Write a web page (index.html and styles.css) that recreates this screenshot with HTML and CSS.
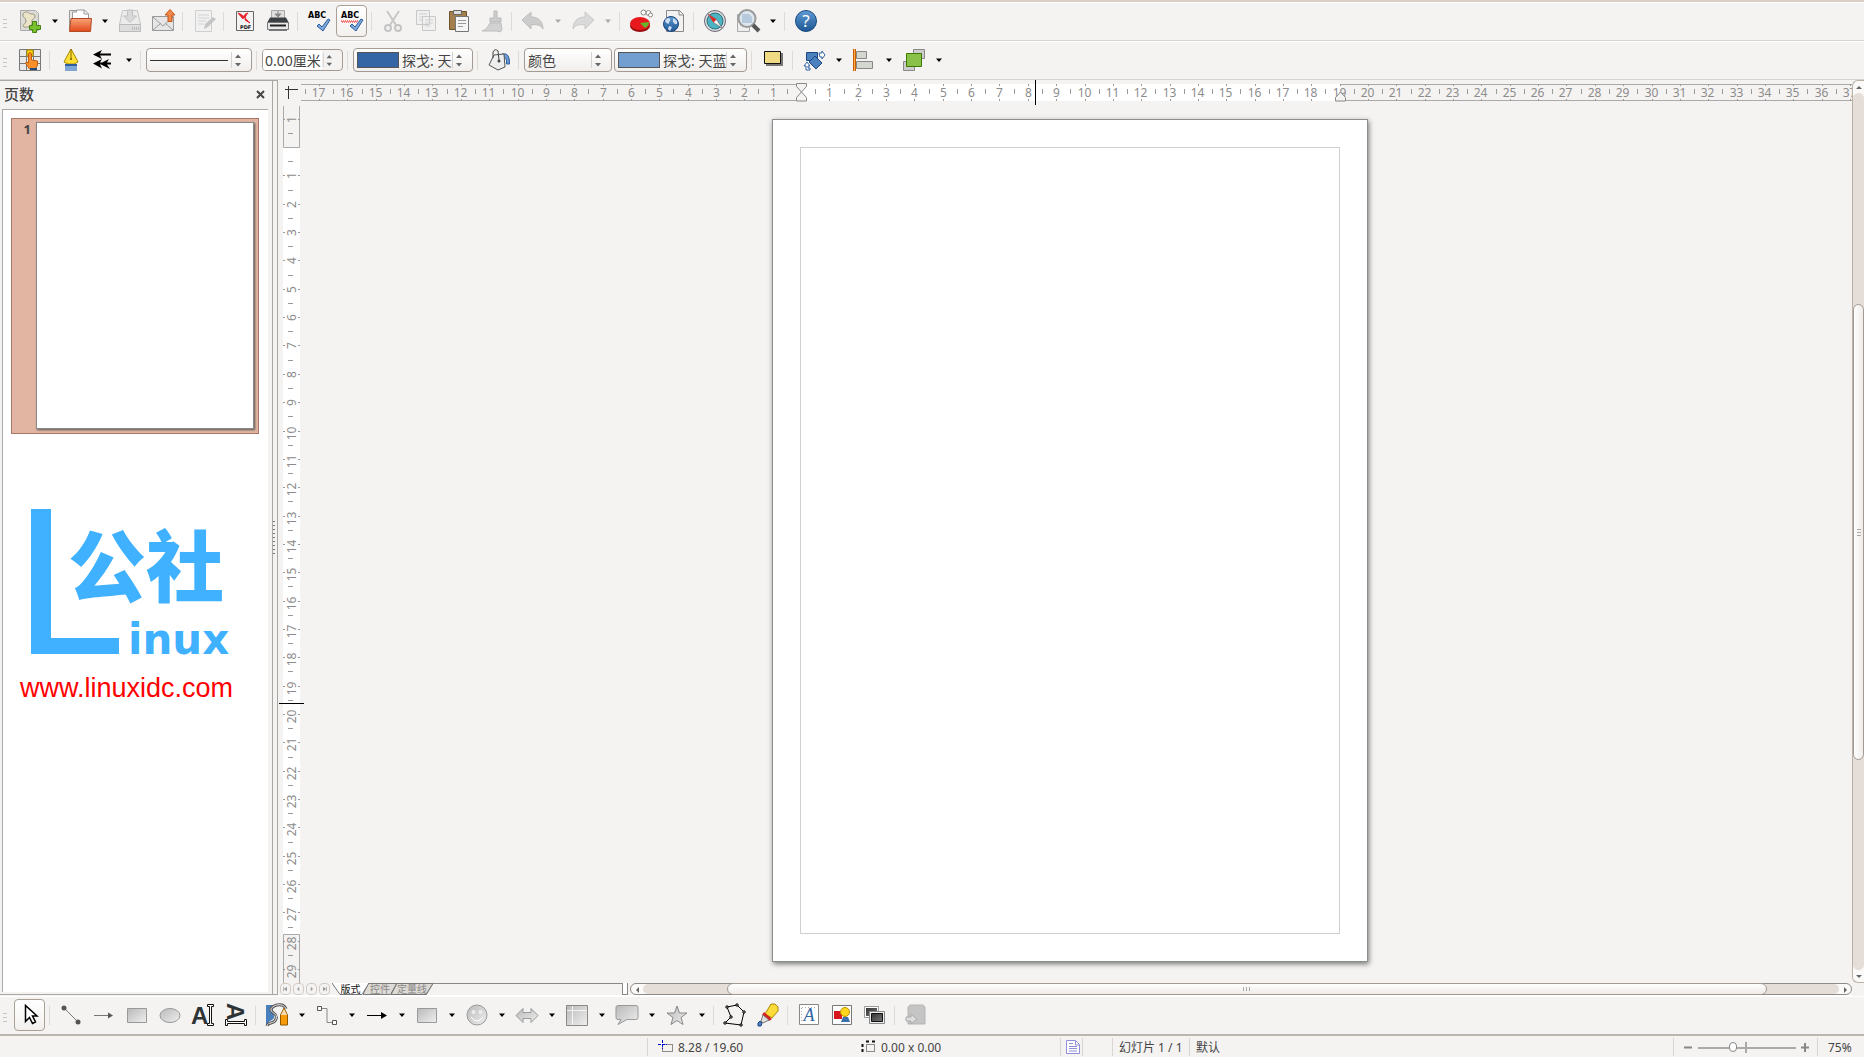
FILE: index.html
```html
<!DOCTYPE html>
<html lang="zh-CN">
<head>
  <meta charset="UTF-8">
  <title>无标题 1 - LibreOffice Draw</title>
  <meta name="viewport" content="width=device-width, initial-scale=1.0">
  <link rel="stylesheet" href="styles.css">
</head>
<body>

  <!-- shared gradients -->
  <svg class="defs" aria-hidden="true">
    <defs>
      <linearGradient id="gGrey" x1="0" y1="0" x2="1" y2="1"><stop offset="0" stop-color="#b9b9b9"/><stop offset="1" stop-color="#efefef"/></linearGradient>
      <linearGradient id="gOrange" x1="0" y1="0" x2="0" y2="1"><stop offset="0" stop-color="#f9a47a"/><stop offset="1" stop-color="#e2481a"/></linearGradient>
      <linearGradient id="gBlue" x1="0" y1="0" x2="0" y2="1"><stop offset="0" stop-color="#5f9bd4"/><stop offset="1" stop-color="#1d5793"/></linearGradient>
      <linearGradient id="gDark" x1="0" y1="0" x2="1" y2="1"><stop offset="0" stop-color="#333"/><stop offset="1" stop-color="#777"/></linearGradient>
    </defs>
    <symbol id="updown" viewBox="0 0 20 22"><path d="M.5 3v16" stroke="#d5d1cc"/><path d="M4 9h6L7 5.500zM4 14h6l-3 3.500z" fill="#666"/></symbol>
    <symbol id="down" viewBox="0 0 17 24"><path d="M6 10.500h6l-3 3.500z" fill="currentColor"/></symbol>
  </svg>

  <div class="topline"></div>

  <!-- standard toolbar -->
  <div class="toolbar">
    <i class="grip"></i>
    <button class="tool" aria-label="新建"><svg viewBox="0 0 24 24"><path d="M2.500 1.500h15l3 3v17h-18z" fill="#dcdcd8" stroke="#aaa"/><path d="M5 5c2-3 5-2 6-1 2 2 6 0 6 3s-4 3-3 6-3 6-8 5c-3-2 2-3 2-6S4 8 5 5z" fill="#ece4c8" stroke="#9a927c"/><path d="M14.500 12.500h4v4h4v4h-4v3h-4v-3h-3v-4h3z" fill="#79c02d" stroke="#478314"/></svg></button><button class="arrow" aria-label="新建选项"><svg><use href="#down"/></svg></button>
    <button class="tool" aria-label="打开"><svg viewBox="0 0 24 24"><path d="M1.500 20V1.500h7l2 3V20z" fill="#e8e8e8" stroke="#999"/><path d="M4.500 14V3h4V1h8l4 4v9z" fill="#fff" stroke="#999"/><path d="M16 1v4h4" fill="none" stroke="#999"/><path d="M3 9.500h20.500L22.500 22.500H1.500z" fill="url(#gOrange)" stroke="#b24a25"/></svg></button><button class="arrow" aria-label="打开选项"><svg><use href="#down"/></svg></button>
    <button class="tool" aria-label="保存"><svg viewBox="0 0 24 24"><path d="M4.500 1.500h15l3 14v7h-21v-7z" fill="#ececec" stroke="#c6c6c6"/><path d="M1.500 15.500h21v7h-21z" fill="#ddd" stroke="#bbb"/><path d="M9.500 1v6h-4l6.500 6.500L18.500 7h-4V1z" fill="#d9d9d9" stroke="#c2c2c2"/><path d="M14 19.500h7" stroke="#bbb" stroke-width="3" stroke-dasharray="1 1"/></svg></button>
    <button class="tool" aria-label="电子邮件"><svg viewBox="0 0 24 24"><path d="M1.500 7.500h21v14h-21z" fill="#e6e6e6" stroke="#999"/><path d="M2 8l10 9L22 8M2 21l8-7M22 21l-8-7" fill="none" stroke="#999"/><path d="M19 .500l5 5.500h-3v6.500h-4V6h-3z" fill="#f18748" stroke="#c45517"/></svg></button>
    <i class="sep"></i>
    <button class="tool" aria-label="编辑文件" disabled><svg viewBox="0 0 24 24"><path d="M3.500 1.500h16v21h-16z" fill="#f1f1f1" stroke="#cfcfcf"/><path d="M6 6h11M6 9h11M6 12h8M6 15h6" stroke="#d3d3d3"/><path d="M21 8l3 2-8 8-4 2 1-5z" fill="#c5c5c5"/></svg></button>
    <i class="sep"></i>
    <button class="tool" aria-label="导出为 PDF"><svg viewBox="0 0 24 24"><path d="M3.500 2.500h17v19h-17z" fill="#f3f3f3" stroke="#666"/><path d="M5 4c4 1 7 5 12 10l-5-3c0-3 1-5 3-7-4 1-4 3-5 6z" fill="#e8232b" stroke="#e8232b"/><text x="7" y="20" class="pdf">PDF</text></svg></button>
    <button class="tool" aria-label="打印"><svg viewBox="0 0 24 24"><path d="M5.500 9V1.500h13V9" fill="#ddd" stroke="#aaa"/><path d="M12 2v3M9 5h6l-3 3z" stroke="#888" fill="#888"/><path d="M4 8.500h16l3 5.500H1z" fill="#3c4043"/><path d="M1.500 13.500h21v7h-21z" fill="#e8e8e8" stroke="#777"/><path d="M4 16.500h16" stroke="#222" stroke-width="2"/><path d="M3 21.500h18" stroke="#777"/></svg></button>
    <i class="sep"></i>
    <button class="tool" aria-label="拼写检查"><svg viewBox="0 0 24 24"><text x="1" y="9" class="abc">ABC</text><path d="M10 17l2-2 3 3 6-8 2 1-7 11z" fill="#7ea9dc" stroke="#2d5c9c"/></svg></button>
    <button class="tool on" aria-label="自动拼写检查"><svg viewBox="0 0 24 24"><text x="1" y="9" class="abc">ABC</text><path d="M1 12h17" stroke="#e00" stroke-dasharray="1 1"/><path d="M1 13h17" stroke="#e00" stroke-dasharray="1 1" stroke-dashoffset="1"/><path d="M10 17l2-2 3 3 6-8 2 1-7 11z" fill="#7ea9dc" stroke="#2d5c9c"/></svg></button>
    <i class="sep"></i>
    <button class="tool" aria-label="剪切" disabled><svg viewBox="0 0 24 24"><path d="M6 2l9 14M18 2L9 16" stroke="#c8c8c8" stroke-width="2"/><circle cx="7" cy="19" r="3" fill="none" stroke="#c4c4c4" stroke-width="2"/><circle cx="17" cy="19" r="3" fill="none" stroke="#c4c4c4" stroke-width="2"/></svg></button>
    <button class="tool" aria-label="复制" disabled><svg viewBox="0 0 24 24"><path d="M2.500 1.500h13v14h-13zM8.500 7.500h13v14h-13z" fill="#f0f0f0" stroke="#c8c8c8"/><path d="M5 5h8M5 8h3M5 11h3M11 11h8M11 14h8M11 17h5" stroke="#d0d0d0"/></svg></button>
    <button class="tool" aria-label="粘贴"><svg viewBox="0 0 24 24"><path d="M2.500 2.500h17v18h-17z" fill="#a37f4c" stroke="#6e532a"/><path d="M6.500 1.500h8v4h-8z" fill="#ddd" stroke="#666"/><path d="M8.500 7.500h13v15h-13z" fill="#f5f5f5" stroke="#777"/><path d="M11 11.500h8M11 14.500h8M11 17.500h5" stroke="#999"/></svg></button>
    <button class="tool" aria-label="克隆格式" disabled><svg viewBox="0 0 24 24"><path d="M14 2h3v7h4v4H10V9h4z" fill="#ccc" stroke="#bbb"/><path d="M10 14h11l1 7-2 2-3-1H2c4-1 6-4 8-8z" fill="#d2d2d2" stroke="#bdbdbd"/></svg></button>
    <i class="sep"></i>
    <button class="tool" aria-label="撤销" disabled><svg viewBox="0 0 24 24"><path d="M1 11l9-8v5c8 0 12 5 12 12-2-4-6-5-12-4v4z" fill="#ccc" stroke="#bdbdbd"/></svg></button><button class="arrow" aria-label="撤销列表" disabled><svg><use href="#down"/></svg></button>
    <button class="tool" aria-label="重做" disabled><svg viewBox="0 0 24 24"><path d="M23 11l-9-8v5C6 8 2 13 2 20c2-4 6-5 12-4v4z" fill="#dadada" stroke="#c8c8c8"/></svg></button><button class="arrow" aria-label="重做列表" disabled><svg><use href="#down"/></svg></button>
    <i class="sep"></i>
    <button class="tool" aria-label="图表"><svg viewBox="0 0 24 24"><ellipse cx="11" cy="17" rx="10" ry="6" fill="#990c0c"/><ellipse cx="11" cy="14.500" rx="10" ry="6.500" fill="#e8191c"/><path d="M11 14l9-1c0 3-2 5-4 6z" fill="#65b52a"/><circle cx="14.500" cy="3.500" r="2.500" fill="#fff" stroke="#888"/><circle cx="19.500" cy="4" r="2.500" fill="#fff" stroke="#888"/><circle cx="21.500" cy="6" r="2" fill="#fff" stroke="#888"/></svg></button>
    <button class="tool" aria-label="超链接"><svg viewBox="0 0 24 24"><path d="M4.500 1.500h13l4 4v17h-17z" fill="#f2f2f2" stroke="#888"/><path d="M17 1v5h4" fill="none" stroke="#888"/><circle cx="9" cy="15" r="7.500" fill="url(#gBlue)" stroke="#20497f"/><path d="M3 12c1-3 4-4 5-2s-1 2-1 4-3 0-4-2zM11 9l4 3v3h-2l-2-2zM7 17l3 1-2 4-2-2z" fill="#cfdff2"/></svg></button>
    <i class="sep"></i>
    <button class="tool" aria-label="导航"><svg viewBox="0 0 24 24"><circle cx="12" cy="12" r="10.500" fill="#ddd" stroke="#667"/><circle cx="12" cy="12" r="8" fill="#4db3c0" stroke="#28707e"/><path d="M5 5l8.500 5.500L19 19l-8.500-5.500z" fill="#f4f4f4" stroke="#444" stroke-width=".5"/><path d="M5 5l8.500 5.500-3 3z" fill="#dd2a22"/></svg></button>
    <button class="tool" aria-label="缩放"><svg viewBox="0 0 24 24"><path d="M1.500 5.500h12v17h-12z" fill="#eee" stroke="#aaa"/><circle cx="11" cy="9.500" r="8.500" fill="#dde6ee" stroke="#999" stroke-width="2"/><path d="M6 5h7l3 3v6H6z" fill="#b7c9dd"/><path d="M17 16l6 6" stroke="#555" stroke-width="4"/></svg></button><button class="arrow" aria-label="缩放选项"><svg><use href="#down"/></svg></button>
    <i class="sep"></i>
    <button class="tool" aria-label="帮助"><svg viewBox="0 0 24 24"><circle cx="12" cy="12" r="10.500" fill="url(#gBlue)" stroke="#1a4a80"/><text x="12" y="18" class="help">?</text></svg></button>
  </div>

  <!-- line and filling toolbar -->
  <div class="toolbar">
    <i class="grip"></i>
    <button class="tool" aria-label="样式"><svg viewBox="0 0 24 24"><path d="M1.500 1.500h21v21h-21zM8.500 1v21M15.500 1v21M1 8.500h21M1 15.500h21" fill="#e8e8e8" stroke="#777"/><path d="M9 2h6v6H9z" fill="#ffd70e" stroke="#b39200"/><path d="M10.500 5.500q1.500-2 3 0V12l6 1v4l-2 4h-6l-4-6 1-1 2 1z" fill="#f7902a" stroke="#c85e0a"/><path d="M12 20h7v2h-7z" fill="#21487b"/></svg></button>
    <i class="sep"></i>
    <button class="tool" aria-label="线条"><svg viewBox="0 0 24 24"><path d="M12 1l5 9 2 4-4 2H9l-4-2 2-4z" fill="#ffdf37" stroke="#a68a00"/><path d="M12 1v9" stroke="#8a7000"/><circle cx="12" cy="11" r="1" fill="#6b5600"/><path d="M6 16h12v7H6z" fill="#7da5d5"/><path d="M6 16h12v2H6z" fill="#2f5f9f"/></svg></button>
    <button class="tool" aria-label="箭头样式"><svg viewBox="0 0 24 24"><path d="M1 6.500l9-4.500-2 3.500h11v2H8l2 3.500z"/><path d="M1 15.500l9-4.500-2 3.500h2l7-3.500-2 3.500h4v2h-4l3 4.500-9-4.500H8l2 4z"/></svg></button><button class="arrow" aria-label="箭头选项"><svg><use href="#down"/></svg></button>
    <i class="sep"></i>
    <span class="combo style"><i class="linesample"></i><select aria-label="线条样式"><option></option></select><svg class="step"><use href="#updown"/></svg></span>
    <i class="sep"></i>
    <span class="spin"><input type="text" aria-label="线条宽度" value="0.00厘米"><svg class="step"><use href="#updown"/></svg></span>
    <i class="sep"></i>
    <span class="combo linecolor"><i class="swatch deep"></i><select aria-label="线条颜色"><option>探戈: 天蓝 3</option></select><svg class="step"><use href="#updown"/></svg></span>
    <i class="sep"></i>
    <button class="tool" aria-label="区域"><svg viewBox="0 0 24 24"><path d="M15 6q8-2 7.500 10h-3q1-7-4-7z" fill="#6e9bd4" stroke="#2d5c9c"/><path d="M7 7l10-1 1 13-7 3-9-5z" fill="#eee" stroke="#555"/><path d="M6 10V4q2-4 5-1l1 9" fill="none" stroke="#444"/><circle cx="12" cy="13" r="1.500" fill="#444"/></svg></button>
    <i class="sep"></i>
    <span class="combo fill"><select aria-label="填充类型"><option>颜色</option></select><svg class="step"><use href="#updown"/></svg></span>
    <span class="combo fillcolor"><i class="swatch sky"></i><select aria-label="填充颜色"><option>探戈: 天蓝 1</option></select><svg class="step"><use href="#updown"/></svg></span>
    <i class="sep"></i>
    <button class="tool" aria-label="阴影"><svg viewBox="0 0 24 24"><path d="M5 5h17v13H5z" fill="#777"/><path d="M3.500 3.500h16v12h-16z" fill="#f0da83" stroke="#111"/></svg></button>
    <i class="sep"></i>
    <button class="tool" aria-label="变换"><svg viewBox="0 0 24 24"><path d="M4.500 4.500h11v8h-11z" fill="#4b81bf" stroke="#1e4680"/><path d="M13 8l7 7-6 6-7-7z" fill="#4b81bf" stroke="#1e4680"/><path d="M17 5h3V3l3 4-3 4V9h-2zM2 18l3-4 3 4H6v2h2v2H4v-4z" fill="#fff" stroke="#2f62a5"/></svg></button><button class="arrow" aria-label="变换选项"><svg><use href="#down"/></svg></button>
    <button class="tool" aria-label="对齐"><svg viewBox="0 0 24 24"><path d="M4.500 3.500h10v7h-10zM4.500 13.500h16v7h-16z" fill="#d3d7cf" stroke="#888"/><path d="M2.500 1v22" stroke="#ce5c00" stroke-width="3"/><path d="M2.500 1v22" stroke="#fcaf3e"/></svg></button><button class="arrow" aria-label="对齐选项"><svg><use href="#down"/></svg></button>
    <button class="tool" aria-label="排列"><svg viewBox="0 0 24 24"><path d="M11.500 1.500h11v9h-11zM1.500 13.500h11v9h-11z" fill="#ccc" stroke="#888"/><path d="M4.500 5.500h15v13h-15z" fill="#8ac249" stroke="#3d7a05"/></svg></button><button class="arrow" aria-label="排列选项"><svg><use href="#down"/></svg></button>
  </div>

  <main class="main">
    <aside class="panel">
      <header class="panel-head">
        <h2>页数</h2>
        <button class="close" aria-label="关闭"><svg width="9" height="9" viewBox="0 0 9 9"><path d="M1 1l7 7M8 1L1 8" stroke="#444" stroke-width="2"/></svg></button>
      </header>
      <div class="pages">
        <div class="page-item">
          <span class="num">1</span>
          <div class="thumb"></div>
        </div>
        <svg class="logo" width="220" height="200" viewBox="20 505 220 200">
          <path d="M31 509h20v129h68v16H31z" fill="#3fb1ff"/>
          <text x="68" y="596" class="logo-cn">公社</text>
          <text x="128" y="654" class="logo-en">inux</text>
          <text x="20" y="697" class="logo-url">www.linuxidc.com</text>
        </svg>
      </div>
    </aside>
    <div class="splitter"><i></i></div>

    <section class="work">
      <svg class="corner" viewBox="0 0 23 21"><path d="M7 9.500h13M10.500 6v13" stroke="#333"/></svg>
      <svg class="ruler h" id="hRuler"></svg>
      <svg class="ruler v" id="vRuler"></svg>
      <div class="canvas">
        <div class="sheet"><div class="frame" id="frame"></div></div>
      </div>
      <div class="vscroll">
        <button class="sb" aria-label="向上"><svg viewBox="0 0 12 12"><path d="M3 8h6L6 5z" fill="#666"/></svg></button>
        <div class="trough"><i class="thumb-v"><b></b></i></div>
        <button class="sb" aria-label="向下"><svg viewBox="0 0 12 12"><path d="M3 5h6L6 8z" fill="#666"/></svg></button>
      </div>
      <div class="bottom">
        <div class="layers">
          <button class="nav" aria-label="第一个"><svg viewBox="0 0 12 12"><path d="M3.500 3v6" stroke="#999"/><path d="M8 3v6L4 6z" fill="#999"/></svg></button>
          <button class="nav" aria-label="上一个"><svg viewBox="0 0 12 12"><path d="M7 3v6L4 6z" fill="#999"/></svg></button>
          <button class="nav" aria-label="下一个"><svg viewBox="0 0 12 12"><path d="M5 3v6l3-3z" fill="#999"/></svg></button>
          <button class="nav" aria-label="最后一个"><svg viewBox="0 0 12 12"><path d="M8.500 3v6" stroke="#999"/><path d="M4 3v6l4-3z" fill="#999"/></svg></button>
          <div class="tabs">
            <button class="tab active"><svg viewBox="0 0 37 12" preserveAspectRatio="none"><path d="M0 0l8 11.500h22L37 0" fill="#fff" stroke="#777"/></svg><span>版式</span></button>
            <button class="tab"><svg viewBox="0 0 37 12" preserveAspectRatio="none"><path d="M6 .500L0 11.500h30L37 .500z" fill="#dedad5" stroke="#777"/></svg><span>控件</span></button>
            <button class="tab wide"><svg viewBox="0 0 37 12" preserveAspectRatio="none"><path d="M5 .500L0 11.500h31L37 .500z" fill="#dedad5" stroke="#777"/></svg><span>定量线</span></button>
          </div>
          <i class="tab-split"></i>
        </div>
        <div class="hscroll">
          <button class="sb" aria-label="向左"><svg viewBox="0 0 12 12"><path d="M8 3v6L5 6z" fill="#666"/></svg></button>
          <div class="trough"><i class="thumb-h"><b></b></i></div>
          <button class="sb" aria-label="向右"><svg viewBox="0 0 12 12"><path d="M5 3v6l3-3z" fill="#666"/></svg></button>
        </div>
      </div>
    </section>
  </main>

  <!-- drawing toolbar -->
  <div class="toolbar drawbar">
    <i class="grip"></i>
    <button class="tool on" aria-label="选择"><svg viewBox="0 0 24 24"><path d="M7.500 2.500v16l4-4 3 6 3-1.500-3-6h4.500z" fill="#fff" stroke="#000" stroke-width="1.500"/></svg></button>
    <i class="sep"></i>
    <button class="tool" aria-label="直线"><svg viewBox="0 0 24 24"><path d="M5 5l14 14" stroke="#777"/><circle cx="5" cy="5" r="2.500" fill="#555"/><circle cx="19" cy="19" r="2.500" fill="#555"/></svg></button>
    <button class="tool" aria-label="箭头线"><svg viewBox="0 0 24 24"><path d="M2 12.500h16" stroke="#777"/><path d="M16 9.500v6l5-3z" fill="#555"/></svg></button>
    <button class="tool" aria-label="矩形"><svg viewBox="0 0 24 24"><path d="M2.500 5.500h19v14h-19z" fill="url(#gGrey)" stroke="#999"/></svg></button>
    <button class="tool" aria-label="椭圆"><svg viewBox="0 0 24 24"><ellipse cx="12" cy="12.500" rx="10" ry="7" fill="url(#gGrey)" stroke="#999"/></svg></button>
    <button class="tool" aria-label="文本"><svg viewBox="0 0 24 24"><text x="0" y="21" class="bigA">A</text><path d="M16.500 1.500h6v2h-2v17h2v2h-6v-2h2v-17h-2z" fill="#fff" stroke="#111"/></svg></button>
    <button class="tool" aria-label="竖排文本"><svg viewBox="0 0 24 24"><text transform="translate(3 0) rotate(90)" class="bigA">A</text><path d="M1.500 16.500h2v2h17v-2h2v6h-2v-2h-17v2h-2z" fill="#fff" stroke="#111"/></svg></button>
    <i class="sep"></i>
    <button class="tool" aria-label="曲线"><svg viewBox="0 0 24 24"><path d="M1 2h12C6 4 8 8 9 13S3 16 3 22H1z" fill="#4a7fbd"/><path d="M21 6C18-2 5 3 6 7s7 3 5 9-8 2-9 7" fill="none" stroke="#555" stroke-width="3"/><path d="M21 6C18-2 5 3 6 7s7 3 5 9-8 2-9 7" fill="none" stroke="#eee"/><path d="M15.500 22V12l3.500-7 3.500 7v10z" fill="#f79b0b" stroke="#8d5a00"/><path d="M16 12l3-6 3 6z" fill="#f4dcb0"/></svg></button><button class="arrow" aria-label="曲线选项"><svg><use href="#down"/></svg></button>
    <button class="tool" aria-label="连接符"><svg viewBox="0 0 24 24"><path d="M6 5.500h6v14h5" fill="none" stroke="#888"/><path d="M2.500 3.500h4v4h-4zM17.500 17.500h4v4h-4z" fill="#fff" stroke="#555"/></svg></button><button class="arrow" aria-label="连接符选项"><svg><use href="#down"/></svg></button>
    <button class="tool" aria-label="线条和箭头"><svg viewBox="0 0 24 24"><path d="M2 12.500h16" stroke="#000"/><path d="M16 9v7l6-3.500z"/></svg></button><button class="arrow" aria-label="线条选项"><svg><use href="#down"/></svg></button>
    <button class="tool" aria-label="基本形状"><svg viewBox="0 0 24 24"><path d="M2.500 5.500h19v14h-19z" fill="url(#gGrey)" stroke="#999"/></svg></button><button class="arrow" aria-label="基本形状选项"><svg><use href="#down"/></svg></button>
    <button class="tool" aria-label="符号形状"><svg viewBox="0 0 24 24"><circle cx="12" cy="12" r="10" fill="url(#gGrey)" stroke="#999"/><path d="M6 14q6 8 12 0" fill="none" stroke="#fff"/><circle cx="8.500" cy="9" r="2" fill="#eee"/><circle cx="15.500" cy="9" r="2" fill="#eee"/></svg></button><button class="arrow" aria-label="符号形状选项"><svg><use href="#down"/></svg></button>
    <button class="tool" aria-label="箭头总汇"><svg viewBox="0 0 24 24"><path d="M1 12.500l7-7v4h8v-4l7 7-7 7v-4H8v4z" fill="url(#gGrey)" stroke="#999"/></svg></button><button class="arrow" aria-label="箭头总汇选项"><svg><use href="#down"/></svg></button>
    <button class="tool" aria-label="流程图"><svg viewBox="0 0 24 24"><path d="M1.500 2.500h21v20h-21z" fill="url(#gGrey)" stroke="#888"/><path d="M7.500 3v19M2 7.500h20" stroke="#f5f5f5"/></svg></button><button class="arrow" aria-label="流程图选项"><svg><use href="#down"/></svg></button>
    <button class="tool" aria-label="标注"><svg viewBox="0 0 24 24"><path d="M3 2.500h18q2 0 2 2v10q0 2-2 2h-9l-9 5 3-5H3q-2 0-2-2v-10q0-2 2-2z" fill="url(#gGrey)" stroke="#999"/></svg></button><button class="arrow" aria-label="标注选项"><svg><use href="#down"/></svg></button>
    <button class="tool" aria-label="星形"><svg viewBox="0 0 24 24"><path d="M12 3l2.500 7H22l-6 4.500 2 7-6-4-6 4 2-7L2 10h7.500z" fill="url(#gGrey)" stroke="#888"/></svg></button><button class="arrow" aria-label="星形选项"><svg><use href="#down"/></svg></button>
    <i class="sep"></i>
    <button class="tool" aria-label="接点"><svg viewBox="0 0 24 24"><path d="M4 4l10-2 7 7-3 13-16-2 6-6z" fill="none" stroke="#000"/><path d="M3 3h2v2H3zM13 1h2v2h-2zM20 8h2v2h-2zM17 21h2v2h-2zM1 19h2v2H1zM7 13h2v2H7z" fill="#fff" stroke="#000"/></svg></button>
    <button class="tool" aria-label="粘附点"><svg viewBox="0 0 24 24"><path d="M12 6l3-5h4l3 3v4l-6 7-7-4z" fill="#fbdb3a" stroke="#a88600"/><path d="M8 9l8 7-3 2-7-6z" fill="#d8201e"/><path d="M7 12l6 5-6 3-2-2z" fill="#ddd" stroke="#777"/><path d="M4 18l2 2-1 3H2v-3z" fill="#4d83c1" stroke="#1e4680"/></svg></button>
    <i class="sep"></i>
    <button class="tool" aria-label="艺术字"><svg viewBox="0 0 24 24"><path d="M2.500 1.500h19v20h-19z" fill="#fff" stroke="#888"/><path d="M5 4.500h14M4.500 5v14" stroke="#aaa" stroke-dasharray="1 2"/><text x="12" y="18" class="art">A</text></svg></button>
    <button class="tool" aria-label="图像"><svg viewBox="0 0 24 24"><path d="M2.500 2.500h19v19h-19z" fill="#fff" stroke="#777"/><path d="M4 8h8v8H4z" fill="#d8151a"/><path d="M11 19l2-5h5l2 5z" fill="#3c6fae"/><circle cx="15" cy="9" r="4.500" fill="#ffd51d" stroke="#b89300"/></svg></button>
    <button class="tool" aria-label="立体化"><svg viewBox="0 0 24 24"><path d="M1.500 3.500h14v11h-14z" fill="#fff" stroke="#999"/><path d="M3 5h11v8H3z" fill="url(#gDark)"/><path d="M6.500 8.500h15v12h-15z" fill="#eee" stroke="#888"/><path d="M8.500 10.500h11v8h-11z" fill="url(#gDark)" stroke="#111"/></svg></button>
    <i class="sep"></i>
    <button class="tool" aria-label="交互" disabled><svg viewBox="0 0 24 24"><path d="M4 4l2-2h13l2 2v17H4z" fill="#c4c4c4" stroke="#b5b5b5"/><path d="M2 14h5v-3l6 5-6 5v-3H2z" fill="#ddd" stroke="#aaa"/></svg></button>
  </div>

  <footer class="status">
    <div class="cell empty"></div>
    <div class="cell pos">
      <svg width="16" height="14" viewBox="0 0 16 14"><path d="M4.500 4.500h10v7h-10z" fill="none" stroke="#222" stroke-dasharray="1 1"/><path d="M0 4.500h9M4.500 0v9" stroke="#00c" stroke-dasharray="3 1"/></svg>
      <span class="xy">8.28 / 19.60</span>
      <svg width="16" height="14" viewBox="0 0 16 14"><path d="M5.500 4.500h8v7h-8z" fill="none" stroke="#222" stroke-dasharray="1 1"/><path d="M5 1.500h3M11 1.500h3M1.500 4v3M1.500 9v3" stroke="#111" stroke-width="2"/></svg>
      <span>0.00 x 0.00</span>
    </div>
    <div class="cell doc"><svg width="14" height="14" viewBox="0 0 14 14"><path d="M.500.500h9l4 4v9H.500z" fill="#fff" stroke="#8f8fdc"/><path d="M9.500 1v4h4M3 3.500h4M3 6.500h8M3 8.500h8M3 11h8" fill="none" stroke="#8f8fdc"/></svg></div>
    <div class="cell sign"></div>
    <div class="cell slide">幻灯片 1 / 1</div>
    <div class="cell master">默认</div>
    <div class="cell zoom">
      <button aria-label="缩小"><svg width="9" height="9" viewBox="0 0 9 9"><path d="M0 4.500h8" stroke="#888" stroke-width="2"/></svg></button>
      <input type="range" min="0" max="100" value="35" aria-label="缩放">
      <button aria-label="放大"><svg width="9" height="9" viewBox="0 0 9 9"><path d="M0 4.500h8M4 0v9" stroke="#888" stroke-width="2"/></svg></button>
    </div>
    <div class="cell percent">75%</div>
  </footer>

  <script src="ruler.js"></script>
</body>
</html>
```

FILE: styles.css
```css
* {
  box-sizing: border-box;
}
body {
  margin: 0;
  height: 100vh;
  display: flex;
  flex-direction: column;
  overflow: hidden;
  background: #f5f3f2;
  color: #444;
  font-family: "Noto Sans", "Noto Sans CJK SC", sans-serif;
  font-size: 12px;
}
button, input, select {
  font: inherit;
  color: inherit;
  margin: 0;
  padding: 0;
  border: none;
  background: none;
}
.defs {
  position: absolute;
  width: 0;
  height: 0;
}
.topline {
  height: 2px;
  background: #dcd0c6;
}

/* toolbars */
.toolbar {
  display: flex;
  align-items: center;
  flex: none;
  height: 39px;
  padding-bottom: 1px;
  border-bottom: 1px solid #d6d3cf;
  border-top: 1px solid #fff;
  font-size: 14px;
}
.drawbar {
  height: 40px;
  border-bottom: 2px solid #bab6ae;
}
.grip {
  flex: none;
  width: 4px;
  height: 9px;
  margin: 4px 6px 0 3px;
  background: repeating-linear-gradient(#c9c5c0 0 1px, #f5f3f2 1px 4px);
}
.tool {
  flex: none;
  display: flex;
  align-items: center;
  justify-content: center;
  width: 31px;
  height: 32px;
  margin: 0 1px;
  border: 1px solid transparent;
  border-radius: 4px;
}
.tool svg {
  flex: none;
  width: 24px;
  height: 24px;
  overflow: visible;
}
.tool.on {
  background: linear-gradient(#fff, #f3f1ef);
  border-color: #a89f96;
}
.arrow {
  flex: none;
  width: 17px;
  height: 24px;
  color: #000;
}
.arrow:disabled {
  color: #aaa;
}
.arrow svg {
  display: block;
  width: 17px;
  height: 24px;
}
.sep {
  flex: none;
  width: 8px;
  height: 19px;
  background: linear-gradient(#dedbd7, #dedbd7) 3px 0 / 1px 100% no-repeat;
}
.combo {
  flex: none;
  display: flex;
  align-items: center;
  height: 24px;
  margin: 0 1px;
  border: 1px solid #a39b93;
  border-radius: 4px;
  background: linear-gradient(#fff, #f1efed);
}
.combo select {
  appearance: none;
  flex: 1;
  min-width: 0;
  height: 22px;
  padding-left: 3px;
  overflow: hidden;
  text-overflow: clip;
}
.step {
  flex: none;
  width: 20px;
  height: 22px;
}
.style { width: 106px; }
.linecolor { width: 120px; }
.fill { width: 88px; }
.fillcolor { width: 133px; }
.linesample {
  width: 80px;
  height: 1px;
  margin-left: 3px;
  background: #333;
}
.swatch {
  flex: none;
  width: 42px;
  height: 16px;
  margin-left: 3px;
  border: 1px solid #555;
}
.deep { background: #3465a4; }
.sky { background: #729fcf; }
.spin {
  flex: none;
  display: flex;
  width: 81px;
  height: 22px;
  margin: 0 1px;
  border: 1px solid #a39b93;
  border-radius: 4px;
  background: #f5f3f2;
}
.spin input {
  flex: 1;
  min-width: 0;
  height: 20px;
  padding-left: 2px;
  background: #fff;
  border-radius: 3px;
}
.spin .step {
  height: 20px;
}

/* icon lettering */
.pdf {
  font: bold 5px "DejaVu Sans", sans-serif;
  fill: #111;
}
.abc {
  font: bold 8px "DejaVu Sans", sans-serif;
  fill: #000;
}
.help {
  font: 17px "Noto Sans", sans-serif;
  fill: #fff;
  text-anchor: middle;
}
.bigA {
  font: bold 24px "Liberation Sans", sans-serif;
  fill: #2e3436;
}
.art {
  font: italic 18px "Liberation Serif", serif;
  fill: #3465a4;
  text-anchor: middle;
}

/* pages panel */
.main {
  flex: 1;
  min-height: 0;
  display: flex;
}
.panel {
  flex: none;
  display: flex;
  flex-direction: column;
  width: 273px;
  margin-bottom: 1px;
  border: 1px solid #aaa6a1;
  border-left: none;
}
.panel-head {
  display: flex;
  align-items: center;
  justify-content: space-between;
  height: 28px;
  padding: 0 7px 2px 4px;
}
.panel-head h2 {
  margin: 0;
  font-size: 15px;
  line-height: 20px;
  font-weight: 500;
}
.close svg {
  display: block;
}
.pages {
  flex: 1;
  margin: 0 4px 2px 2px;
  padding: 8px 9px 0 8px;
  background: #fff;
  border: 1px solid #aaa;
  border-width: 1px 0 0 1px;
}
.page-item {
  display: flex;
  padding: 3px 4px 4px 0;
  background: #e2b5a2;
  border: 1px solid #a5796a;
}
.num {
  width: 24px;
  padding-right: 5px;
  text-align: right;
  font-size: 13px;
  line-height: 14px;
  font-weight: bold;
}
.thumb {
  flex: 1;
  aspect-ratio: 217 / 306;
  background: #fff;
  border: 1px solid #888;
  box-shadow: 1px 1px 2px #555;
}
.logo {
  display: block;
  margin: 71px 0 0 9px;
  overflow: visible;
}
.logo-cn {
  font: 900 78px "Noto Sans CJK SC", sans-serif;
  fill: #3fb1ff;
}
.logo-en {
  font: bold 42px "DejaVu Sans", sans-serif;
  fill: #3fb1ff;
}
.logo-url {
  font: 27px "Liberation Sans", sans-serif;
  fill: #f00;
}
.splitter {
  flex: none;
  display: flex;
  align-items: center;
  width: 5px;
  margin-bottom: 1px;
  border: 1px solid #aaa6a1;
  border-left: none;
}
.splitter i {
  width: 2px;
  height: 33px;
  background: repeating-linear-gradient(#777 0 1px, transparent 1px 4px);
}

/* drawing area */
.work {
  flex: 1;
  min-width: 0;
  display: grid;
  grid-template-columns: 23px minmax(0, 1fr) 12px;
  grid-template-rows: 21px minmax(0, 1fr) 13px;
}
.corner {
  width: 23px;
  height: 21px;
}
.ruler {
  font-size: 12px;
  fill: #8c8c8c;
}
.ruler text {
  text-anchor: middle;
}
.ruler.h {
  width: 100%;
  height: 25px;
}
.ruler.v {
  grid-area: 2 / 1;
  width: 26px;
  height: 100%;
}
.canvas {
  grid-area: 2 / 2;
  overflow: hidden;
  padding: 18px 13px 0 0;
}
.sheet {
  width: 596px;
  height: 843px;
  margin: 0 auto;
  padding: 27px;
  background: #fff;
  border: 1px solid #8d8f8f;
  box-shadow: 1px 2px 5px #777;
}
.frame {
  height: 100%;
  border: 1px solid #d0d0d0;
}
.vscroll {
  grid-area: 1 / 3 / 3 / 4;
  display: flex;
  flex-direction: column;
  border: 1px solid #b9b0a8;
  border-right: none;
  border-radius: 6px 0 0 6px;
  background: #fbfaf9;
}
.sb {
  flex: none;
  width: 12px;
  height: 12px;
}
.sb svg {
  display: block;
  width: 12px;
  height: 12px;
}
.trough {
  flex: 1;
  background: #e4ddd8;
  border-radius: 6px;
}
.thumb-v, .thumb-h {
  display: flex;
  align-items: center;
  justify-content: center;
  background: linear-gradient(90deg, #fff, #efebe8);
  border: 1px solid #a39b93;
  border-radius: 6px;
}
.thumb-v {
  height: 52%;
  margin-top: 211px;
}
.thumb-v b {
  width: 4px;
  height: 7px;
  background: repeating-linear-gradient(#aaa 0 1px, transparent 1px 3px);
}
.bottom {
  grid-area: 3 / 1 / 4 / 3;
  display: flex;
  border-bottom: 1px solid #fff;
}
.layers {
  flex: none;
  display: flex;
  width: 350px;
  padding-left: 2px;
}
.nav {
  width: 11px;
  height: 12px;
  margin-right: 2px;
  border: 1px solid #d2cbc5;
  border-radius: 4px;
}
.nav svg {
  display: block;
  width: 9px;
  height: 10px;
}
.tabs {
  flex: 1;
  display: flex;
  border-top: 1px solid #888;
}
.tab {
  position: relative;
  width: 34px;
  height: 12px;
  margin: -1px 0 0 -6px;
  color: #888;
  font-size: 10px;
  line-height: 12px;
}
.tab svg {
  position: absolute;
  left: 0;
  top: 0;
  width: 100%;
  height: 100%;
}
.tab span {
  position: relative;
}
.tab.active {
  z-index: 1;
  width: 37px;
  margin-left: 0;
  color: #111;
}
.tab.wide {
  width: 42px;
}
.tab-split {
  width: 6px;
  border: 1px solid #888;
  border-top: none;
  background: #fff;
}
.hscroll {
  flex: 1;
  display: flex;
  margin-left: 2px;
  border: 1px solid #8f8a85;
  border-radius: 6px;
  background: #fbfaf9;
}
.thumb-h {
  width: 87%;
  height: 12px;
  margin: -1px 0 0 7%;
  background: linear-gradient(#fff, #efebe8);
}
.thumb-h b {
  width: 7px;
  height: 4px;
  background: repeating-linear-gradient(90deg, #aaa 0 1px, transparent 1px 3px);
}

/* status bar */
.status {
  flex: none;
  display: flex;
  height: 21px;
}
.cell {
  flex: none;
  display: flex;
  align-items: center;
  height: 18px;
  margin-top: 2px;
  padding-left: 6px;
  border-right: 1px solid #d9d5d1;
  white-space: pre;
}
.empty { width: 648px; }
.pos {
  width: 413px;
  padding-left: 10px;
  gap: 4px;
}
.xy {
  width: 179px;
}
.doc {
  width: 22px;
  padding-left: 5px;
}
.sign { width: 30px; }
.slide { width: 77px; }
.master { flex: 1; }
.zoom {
  width: 144px;
  padding-left: 10px;
  gap: 5px;
}
.zoom svg {
  display: block;
}
.zoom input {
  appearance: none;
  width: 98px;
  height: 11px;
  background:
    linear-gradient(#aaa, #aaa) 47px 0 / 2px 100% no-repeat,
    linear-gradient(#aaa, #aaa) 0 5px / 100% 2px no-repeat;
}
.zoom input::-webkit-slider-thumb {
  appearance: none;
  width: 8px;
  height: 10px;
  background: #fff;
  border: 1px solid #888;
  border-radius: 4px;
}
.percent {
  width: 46px;
  padding-left: 10px;
  border-right: none;
}
```

FILE: ruler.js
```js
const CM = 28.35;            // one centimetre at 75% zoom
const cursor = { x: 8.28, y: 19.6 };
const hRuler = document.getElementById('hRuler');
const vRuler = document.getElementById('vRuler');
const frame = document.getElementById('frame');

function line(x1, y1, x2, y2, color) {
  return `<path d="M${x1} ${y1}L${x2} ${y2}" stroke="${color}" fill="none"/>`;
}

function drawHorizontal() {
  const box = hRuler.getBoundingClientRect();
  const f = frame.getBoundingClientRect();
  const start = Math.floor(f.left - box.left) + 1.5;
  const end = start + f.width - 1;
  const first = Math.ceil(-start / CM * 2);
  const last = Math.floor((box.width - start) / CM * 2) + 1;
  let out = `<rect x="${start}" y="4" width="${f.width - 1}" height="17" fill="#fff"/>`;
  out += line(0, 4.5, start, 4.5, '#aaa') + line(0, 20.5, start, 20.5, '#aaa');
  out += line(end, 4.5, box.width, 4.5, '#aaa') + line(end, 20.5, box.width, 20.5, '#aaa');

  for (let i = first; i <= last; i++) {
    const x = Math.floor(start + i * CM / 2) + 0.5;
    if (i % 2) {
      out += line(x, 9, x, 14, '#999');
    } else if (i !== 0) {
      const n = Math.abs(i / 2);
      out += line(x, 4, x, 6, '#999') + line(x, 19, x, 21, '#999');
      out += `<text x="${n > 9 ? x - 1 : x}" y="17">${n}</text>`;
    }
  }

  // indent markers
  out += `<path d="M${start - 5} 3.500h10v3l-5 5.500l5 5.500v3.500h-10v-3.500l5-5.500l-5-5.500z" fill="#f5f3f2" stroke="#888"/>`;
  out += `<path d="M${end} 12l5 5.500v3.500h-10v-3.500z" fill="#f5f3f2" stroke="#888"/>`;
  const c = Math.floor(start + cursor.x * CM) - 0.5;
  out += line(c, 0, c, 25, '#000');
  hRuler.innerHTML = out;
}

function drawVertical() {
  const box = vRuler.getBoundingClientRect();
  const f = frame.getBoundingClientRect();
  const start = Math.round(f.top - box.top) + 0.5;
  const end = start + f.height;
  const first = Math.ceil((5 - start) / CM * 2);
  const last = Math.floor((box.height - start) / CM * 2);
  let out = `<rect x="5" y="${start}" width="17" height="${f.height}" fill="#fff"/>`;
  out += `<path d="M5.500 5V${start}H21.500V5M5.500 ${box.height}V${end}H21.500V${box.height}" fill="none" stroke="#aaa"/>`;

  for (let i = first; i <= last; i++) {
    const y = Math.floor(start + i * CM / 2) + 0.5;
    if (i % 2) {
      out += line(10, y, 15, y, '#999');
    } else if (i !== 0) {
      const n = Math.abs(i / 2);
      out += line(5, y, 7, y, '#999') + line(20, y, 22, y, '#999');
      out += `<text transform="translate(18 ${n > 9 ? y + 2 : y}) rotate(-90)">${n}</text>`;
    }
  }

  const c = Math.round(start + cursor.y * CM) + 0.5;
  out += line(1, c, 26, c, '#000');
  vRuler.innerHTML = out;
}

function drawRulers() {
  drawHorizontal();
  drawVertical();
}

drawRulers();
window.addEventListener('resize', drawRulers);
```
